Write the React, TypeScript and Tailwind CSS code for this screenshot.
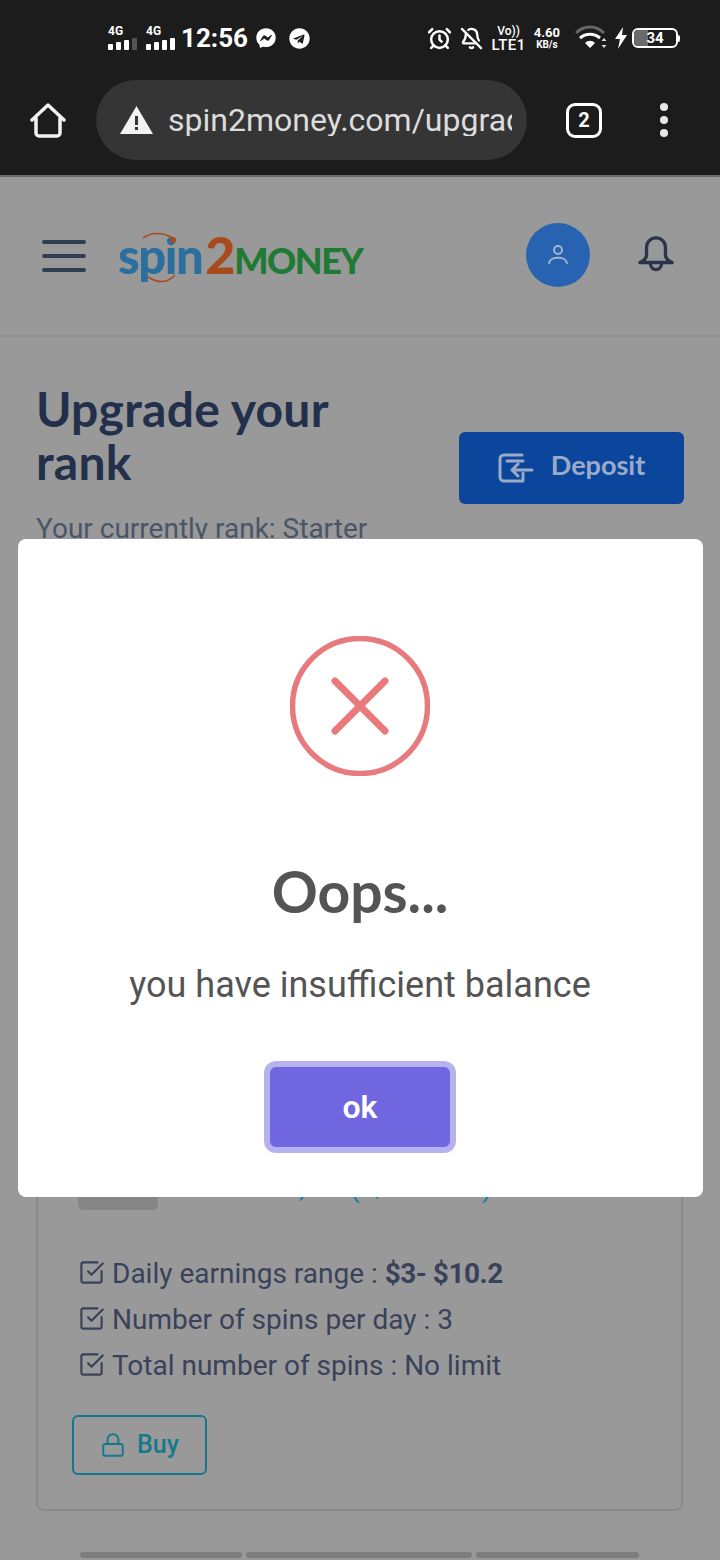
import React from "react";
import { AlarmClock, BellOff, Lock, SquareCheckBig } from "lucide-react";
import { FaFacebookMessenger, FaTelegram } from "react-icons/fa";

function Signal({ dim }: { dim?: boolean }) {
  const heights = [6, 8, 10, 12];
  return (
    <div className="flex flex-col items-start">
      <span className="text-[12px] leading-[10px] font-bold text-white">4G</span>
      <div className="mt-[1px] flex h-[13px] items-end gap-[3px]">
        {heights.map((h, i) => (
          <span
            key={i}
            className={dim && i === 3 ? "w-[5px] rounded-[1px] bg-[#555]" : "w-[5px] rounded-[1px] bg-white"}
            style={{ height: h }}
          />
        ))}
      </div>
    </div>
  );
}

function StatusBar() {
  return (
    <div className="flex h-[60px] items-center justify-between pt-[16px] pr-[40px] pl-[108px] text-white">
      <div className="flex items-center">
        <Signal dim />
        <div className="ml-[9px]">
          <Signal />
        </div>
        <span className="ml-[6px] text-[26px] leading-none font-bold">12:56</span>
        <FaFacebookMessenger className="ml-[8px] text-[20px]" />
        <FaTelegram className="ml-[13px] text-[21px]" />
      </div>
      <div className="flex items-center">
        <AlarmClock size={25} strokeWidth={2.4} />
        <BellOff size={23} strokeWidth={2.4} className="ml-[8px]" />
        <div className="ml-[8px] flex flex-col text-center">
          <span className="text-[12px] leading-[13px] font-medium">Vo))</span>
          <span className="text-[15px] leading-[14px] font-medium tracking-[0.5px]">LTE1</span>
        </div>
        <div className="ml-[8px] flex flex-col items-center font-bold">
          <span className="text-[13px] leading-[13px]">4.60</span>
          <span className="text-[10px] leading-[12px]">KB/s</span>
        </div>
        <svg width="34" height="26" viewBox="0 0 34 26" className="ml-[15px]">
          <path d="M1 8c8-8 20-8 28 0" fill="none" stroke="#666" strokeWidth="3" />
          <path d="M5 13c6-5 14-5 20 0" fill="none" stroke="#fff" strokeWidth="3" />
          <path d="M10 18c3-3 7-3 10 0l-5 5z" fill="#fff" />
          <path d="M29 13l2.500 3h-5zM29 23l2.500-3h-5z" fill="#ddd" />
        </svg>
        <svg width="14" height="22" viewBox="0 0 14 22" className="ml-[5px]">
          <path d="M9 0L1 12h5l-2 10 9-14H8z" fill="#fff" />
        </svg>
        <div className="relative ml-[4px] flex h-[20px] w-[46px] overflow-hidden rounded-[6px] border-2 border-white">
          <div className="w-[34%] bg-[#6b6b6b]" />
          <span className="absolute inset-0 text-center text-[15px] leading-[17px] font-bold">34</span>
        </div>
        <span className="h-[7px] w-[2px] rounded-r bg-white" />
      </div>
    </div>
  );
}

function BrowserBar() {
  return (
    <div className="flex h-[117px] items-center border-b-2 border-[#6a6a6a] pt-[5px] pl-[30px]">
      <svg width="36" height="36" viewBox="0 0 36 36" fill="none" stroke="#f2f2f2" strokeWidth="3.500" strokeLinejoin="round" strokeLinecap="round">
        <path d="M2 18L18 3l16 15M6 16v15a3 3 0 0 0 3 3h18a3 3 0 0 0 3-3V16" />
      </svg>
      <div className="ml-[30px] flex h-[80px] w-[431px] items-center rounded-[40px] bg-[#353535] pl-[24px]">
        <svg width="33" height="28" viewBox="0 0 33 28" className="shrink-0">
          <path d="M16.500 0L33 28H0z" fill="#f2f2f2" />
          <rect x="15" y="10" width="3" height="9" fill="#353535" />
          <rect x="15" y="21" width="3" height="3" fill="#353535" />
        </svg>
        <div className="ml-[15px] w-[344px] overflow-hidden text-[32px] leading-none whitespace-nowrap text-[#dcdcdc]">
          spin2money.com/upgrade
        </div>
      </div>
      <div className="ml-[39px] flex h-[35px] w-[36px] items-center justify-center rounded-[9px] border-[3px] border-white text-[20px] font-bold text-white">
        2
      </div>
      <div className="ml-[58px] flex flex-col gap-[5px]">
        <span className="h-[8px] w-[8px] rounded-full bg-[#e6e6e6]" />
        <span className="h-[8px] w-[8px] rounded-full bg-[#e6e6e6]" />
        <span className="h-[8px] w-[8px] rounded-full bg-[#e6e6e6]" />
      </div>
    </div>
  );
}

function Logo() {
  return (
    <div className="relative mb-[5px] ml-[32px] flex items-baseline font-['Lato',sans-serif] leading-none font-black">
      <span className="text-[49px] tracking-[-1.500px] text-[#2a6f9e]">spin</span>
      <span className="ml-[3px] text-[52px] tracking-[-1px] text-[#a84a1c]">2</span>
      <span className="text-[36px] tracking-[-1.500px] text-[#1f7a35]">MONEY</span>
      <svg width="60" height="60" viewBox="0 0 60 60" fill="none" className="absolute top-0 left-[18px]">
        <path d="M7 10Q20 1 37 10" stroke="#a84a1c" strokeWidth="1.500" />
        <path d="M12 49Q28 59 39 47" stroke="#a84a1c" strokeWidth="1.500" />
        <circle cx="37" cy="12" r="3" fill="#a84a1c" />
      </svg>
    </div>
  );
}

function SiteHeader() {
  return (
    <div className="flex h-[160px] items-center border-b-2 border-[#8f8f8f] pr-[46px] pl-[42px]">
      <div className="flex flex-col gap-[10px]">
        <span className="h-[4px] w-[44px] rounded-full bg-[#2f3d55]" />
        <span className="h-[4px] w-[44px] rounded-full bg-[#2f3d55]" />
        <span className="h-[4px] w-[44px] rounded-full bg-[#2f3d55]" />
      </div>
      <Logo />
      <div className="mb-[2px] ml-auto flex h-[64px] w-[64px] items-center justify-center rounded-full bg-[#2763b0]">
        <svg width="22" height="24" viewBox="0 0 22 24" fill="none" stroke="#a3b5cf" strokeWidth="2" strokeLinecap="round">
          <circle cx="11" cy="7" r="4" />
          <path d="M2 20c1-7 17-7 18 0" />
        </svg>
      </div>
      <svg width="36" height="40" viewBox="0 0 38 40" fill="none" stroke="#2a344c" strokeWidth="3.500" strokeLinejoin="round" className="mb-[6px] ml-[48px]">
        <path d="M9 14a10 10 0 0 1 20 0v8c0 4 3 6 7 8H2c4-2 7-4 7-8z" />
        <path d="M13 30c0 10 12 10 12 0" />
      </svg>
    </div>
  );
}

function BuyCard() {
  const rows = [
    { label: "Daily earnings range : ", value: "$3- $10.2" },
    { label: "Number of spins per day : 3" },
    { label: "Total number of spins : No limit" },
  ];
  return (
    <div className="mt-[48px] h-[910px] w-[647px] rounded-[8px] border-2 border-[#8a8a8a] px-[34px] pt-[527px]">
      <div className="flex items-end pl-[6px]">
        <div className="h-[80px] w-[80px] rounded-[6px] bg-[#858585]" />
        <span className="mb-[6px] ml-[18px] text-[28px] leading-[32px] whitespace-nowrap text-[#17849a]">
          Starter 30, 30 (1/ 30 wks)
        </span>
      </div>
      <ul className="mt-[46px] flex flex-col gap-[10px] pl-[6px]">
        {rows.map((row) => (
          <li key={row.label} className="flex h-[36px] items-center text-[#39425a]">
            <SquareCheckBig size={27} strokeWidth={1.9} className="mb-[4px] shrink-0 text-[#39425a]" />
            <span className="ml-[7px] text-[28px] leading-none whitespace-nowrap">
              {row.label}
              {row.value && <b className="font-bold tracking-[-0.5px]">{row.value}</b>}
            </span>
          </li>
        ))}
      </ul>
      <button className="mt-[31px] flex h-[60px] w-[135px] items-center justify-center rounded-[6px] border-2 border-[#15798d] text-[25px] font-medium text-[#15798d]">
        <Lock size={26} strokeWidth={1.8} className="mr-[11px]" />
        Buy
      </button>
    </div>
  );
}

function ErrorDialog() {
  return (
    <div className="absolute inset-0 flex items-center justify-center pb-[2px]">
      <div className="flex h-[658px] w-[685px] flex-col items-center rounded-[8px] bg-white pt-[97px]">
        <svg width="140" height="140" viewBox="0 0 140 140" fill="none" stroke="#e8797c" strokeLinecap="round">
          <circle cx="70" cy="70" r="67.500" strokeWidth="5.500" />
          <path d="M45 45l50 50M95 45l-50 50" strokeWidth="7" />
        </svg>
        <h2 className="mt-[81px] font-['Lato',sans-serif] text-[57px] leading-[68px] font-bold text-[#545454]">
          Oops...
        </h2>
        <p className="mt-[38px] text-[36px] leading-[44px] text-[#545454]">you have insufficient balance</p>
        <button className="mt-[60px] h-[80px] w-[180px] rounded-[6px] bg-[#7066e0] text-[32px] font-semibold text-white shadow-[0_0_0_6px_rgba(112,102,224,0.5)]">
          ok
        </button>
      </div>
    </div>
  );
}

export default function App() {
  return (
    <div className="flex h-[1560px] w-[720px] flex-col overflow-hidden bg-[#1c1c1c] font-['Roboto',sans-serif]">
      <StatusBar />
      <BrowserBar />
      <div className="relative flex-1 overflow-hidden bg-[#999999]">
        <SiteHeader />
        <div className="px-[36px] pt-[45px]">
          <div className="flex items-center justify-between">
            <div className="pb-[4px]">
              <h1 className="w-[330px] font-['Lato',sans-serif] text-[48px] leading-[53px] font-bold tracking-[0.25px] text-[#22304b]">
                Upgrade your rank
              </h1>
              <p className="mt-[21px] text-[28px] leading-[40px] whitespace-nowrap text-[#4b5568]">
                Your currently rank: Starter
              </p>
            </div>
            <button className="flex h-[72px] w-[225px] items-center justify-center rounded-[6px] bg-[#0c469c] font-['Lato',sans-serif] text-[27px] font-bold text-[#9aabc8]">
              <svg width="36" height="30" viewBox="0 0 36 30" fill="none" stroke="#9aabc8" strokeWidth="3" strokeLinecap="round" strokeLinejoin="round" className="mr-[17px]">
                <path d="M24 2H6a4 4 0 0 0-4 4v18a4 4 0 0 0 4 4h18M9 8h16M25 20v8" />
                <path d="M34 17H14M20 11l-6 6 6 6" />
              </svg>
              <span className="pb-[4px]">Deposit</span>
            </button>
          </div>
          <BuyCard />
          <div className="mt-[41px] flex gap-[4px] pl-[44px]">
            <span className="h-[6px] w-[162px] rounded-sm bg-[#7d7d7d]" />
            <span className="h-[6px] w-[226px] rounded-sm bg-[#7d7d7d]" />
            <span className="h-[6px] w-[163px] rounded-sm bg-[#7d7d7d]" />
          </div>
        </div>
        <ErrorDialog />
      </div>
    </div>
  );
}
